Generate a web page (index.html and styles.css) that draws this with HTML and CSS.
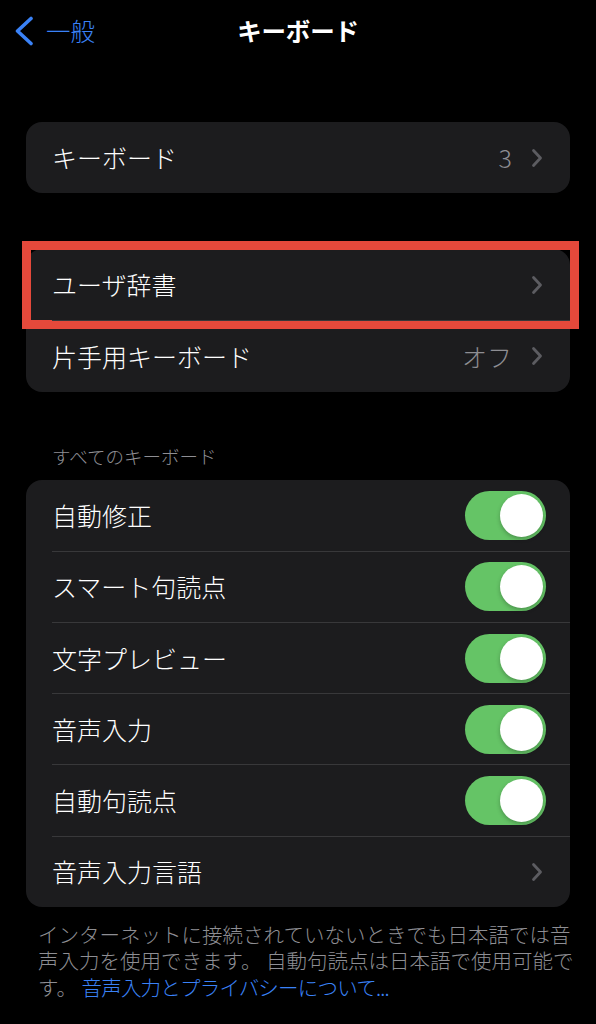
FILE: index.html
```html
<!DOCTYPE html>
<html lang="ja">
<head>
<meta charset="utf-8">
<title>キーボード</title>
<link rel="stylesheet" href="styles.css">
</head>
<body>
<header class="nav">
  <a class="back">
    <svg class="back-icon" width="20" height="30" viewBox="0 0 20 30"><polyline points="17,2.5 3.5,15 17,27.5" fill="none" stroke="#3a82f7" stroke-width="3.6" stroke-linecap="round" stroke-linejoin="round"/></svg>
    <span>一般</span>
  </a>
  <h1 class="title">キーボード</h1>
  <div></div>
</header>

<main class="content">
  <section class="group g1">
    <div class="row">
      <div class="row-inner">
        <span class="label">キーボード</span>
        <span class="value">3</span>
        <svg class="chev" width="12" height="20" viewBox="0 0 12 20"><polyline points="2.5,2.5 9.5,10 2.5,17.5" fill="none" stroke="#5c5c61" stroke-width="2.8" stroke-linecap="round" stroke-linejoin="round"/></svg>
      </div>
    </div>
  </section>

  <section class="group g2">
    <div class="row">
      <div class="row-inner">
        <span class="label">ユーザ辞書</span>
        <svg class="chev" width="12" height="20" viewBox="0 0 12 20"><polyline points="2.5,2.5 9.5,10 2.5,17.5" fill="none" stroke="#5c5c61" stroke-width="2.8" stroke-linecap="round" stroke-linejoin="round"/></svg>
      </div>
      <div class="highlight"></div>
    </div>
    <div class="row">
      <div class="row-inner">
        <span class="label">片手用キーボード</span>
        <span class="value">オフ</span>
        <svg class="chev" width="12" height="20" viewBox="0 0 12 20"><polyline points="2.5,2.5 9.5,10 2.5,17.5" fill="none" stroke="#5c5c61" stroke-width="2.8" stroke-linecap="round" stroke-linejoin="round"/></svg>
      </div>
    </div>
  </section>

  <h2 class="section-title">すべてのキーボード</h2>
  <section class="group g3">
    <div class="row">
      <div class="row-inner">
        <span class="label">自動修正</span>
        <span class="toggle"><span class="knob"></span></span>
      </div>
    </div>
    <div class="row">
      <div class="row-inner">
        <span class="label">スマート句読点</span>
        <span class="toggle"><span class="knob"></span></span>
      </div>
    </div>
    <div class="row">
      <div class="row-inner">
        <span class="label">文字プレビュー</span>
        <span class="toggle"><span class="knob"></span></span>
      </div>
    </div>
    <div class="row">
      <div class="row-inner">
        <span class="label">音声入力</span>
        <span class="toggle"><span class="knob"></span></span>
      </div>
    </div>
    <div class="row">
      <div class="row-inner">
        <span class="label">自動句読点</span>
        <span class="toggle"><span class="knob"></span></span>
      </div>
    </div>
    <div class="row">
      <div class="row-inner">
        <span class="label">音声入力言語</span>
        <svg class="chev" width="12" height="20" viewBox="0 0 12 20"><polyline points="2.5,2.5 9.5,10 2.5,17.5" fill="none" stroke="#5c5c61" stroke-width="2.8" stroke-linecap="round" stroke-linejoin="round"/></svg>
      </div>
    </div>
  </section>

  <p class="footer">インターネットに接続されていないときでも日本語では音声入力を使用できます。 自動句読点は日本語で使用可能です。 <a class="link">音声入力とプライバシーについて...</a></p>
</main>
</body>
</html>
```

FILE: styles.css
```css
* { box-sizing: border-box; }

html, body {
  margin: 0;
  padding: 0;
  background: #000;
}

body {
  width: 596px;
  height: 1024px;
  overflow: hidden;
  font-family: "Noto Sans CJK JP", "Noto Sans", sans-serif;
  color: #fff;
}

.nav {
  height: 62px;
  display: grid;
  grid-template-columns: 1fr auto 1fr;
  align-items: center;
}

.back {
  display: flex;
  align-items: center;
  gap: 12px;
  padding-left: 14px;
  color: #3a82f7;
  font-size: 24.5px;
  font-weight: 300;
  line-height: 1;
}

.back-icon { display: block; }

.title {
  margin: 0;
  font-size: 24.5px;
  font-weight: 700;
  line-height: 1;
  letter-spacing: -0.2px;
}

.content {
  padding-top: 60px;
}

.group {
  margin: 0 26px 0 26px;
  background: #1c1c1e;
  border-radius: 16px;
}

.g2 { margin-top: 56px; }

.row {
  position: relative;
  height: 71.2px;
  padding-left: 26px;
}

.row-inner {
  height: 100%;
  display: flex;
  align-items: center;
  padding-right: 27px;
}

.row + .row .row-inner {
  border-top: 1px solid #38383a;
}

.label {
  flex: 1;
  font-size: 25px;
  font-weight: 300;
  line-height: 1;
  white-space: nowrap;
}

.value {
  font-size: 25px;
  font-weight: 300;
  line-height: 1;
  color: #8e8e93;
  margin-right: 19px;
}

.chev { display: block; flex: none; }

.toggle {
  position: relative;
  width: 81px;
  height: 49px;
  border-radius: 25px;
  background: #65c466;
  flex: none;
  margin-right: -3px;
}

.knob {
  position: absolute;
  right: 3px;
  top: 3px;
  width: 43px;
  height: 43px;
  border-radius: 50%;
  background: #fff;
  box-shadow: 0 2px 4px rgba(0, 0, 0, 0.25);
}

.highlight {
  position: absolute;
  left: -4px;
  top: -8px;
  right: -9px;
  bottom: -9px;
  border: 9px solid #e5493b;
}

.section-title {
  margin: 51px 0 11px 52px;
  font-size: 18.5px;
  font-weight: 300;
  line-height: 26px;
  color: #8e8e93;
}

.footer {
  margin: 14px 0 0 0;
  padding: 0 13px 0 38px;
  font-size: 20.5px;
  font-weight: 300;
  line-height: 26.5px;
  color: #8e8e93;
}

.link {
  display: inline-block;
  color: #3a82f7;
  letter-spacing: -0.8px;
}
```
